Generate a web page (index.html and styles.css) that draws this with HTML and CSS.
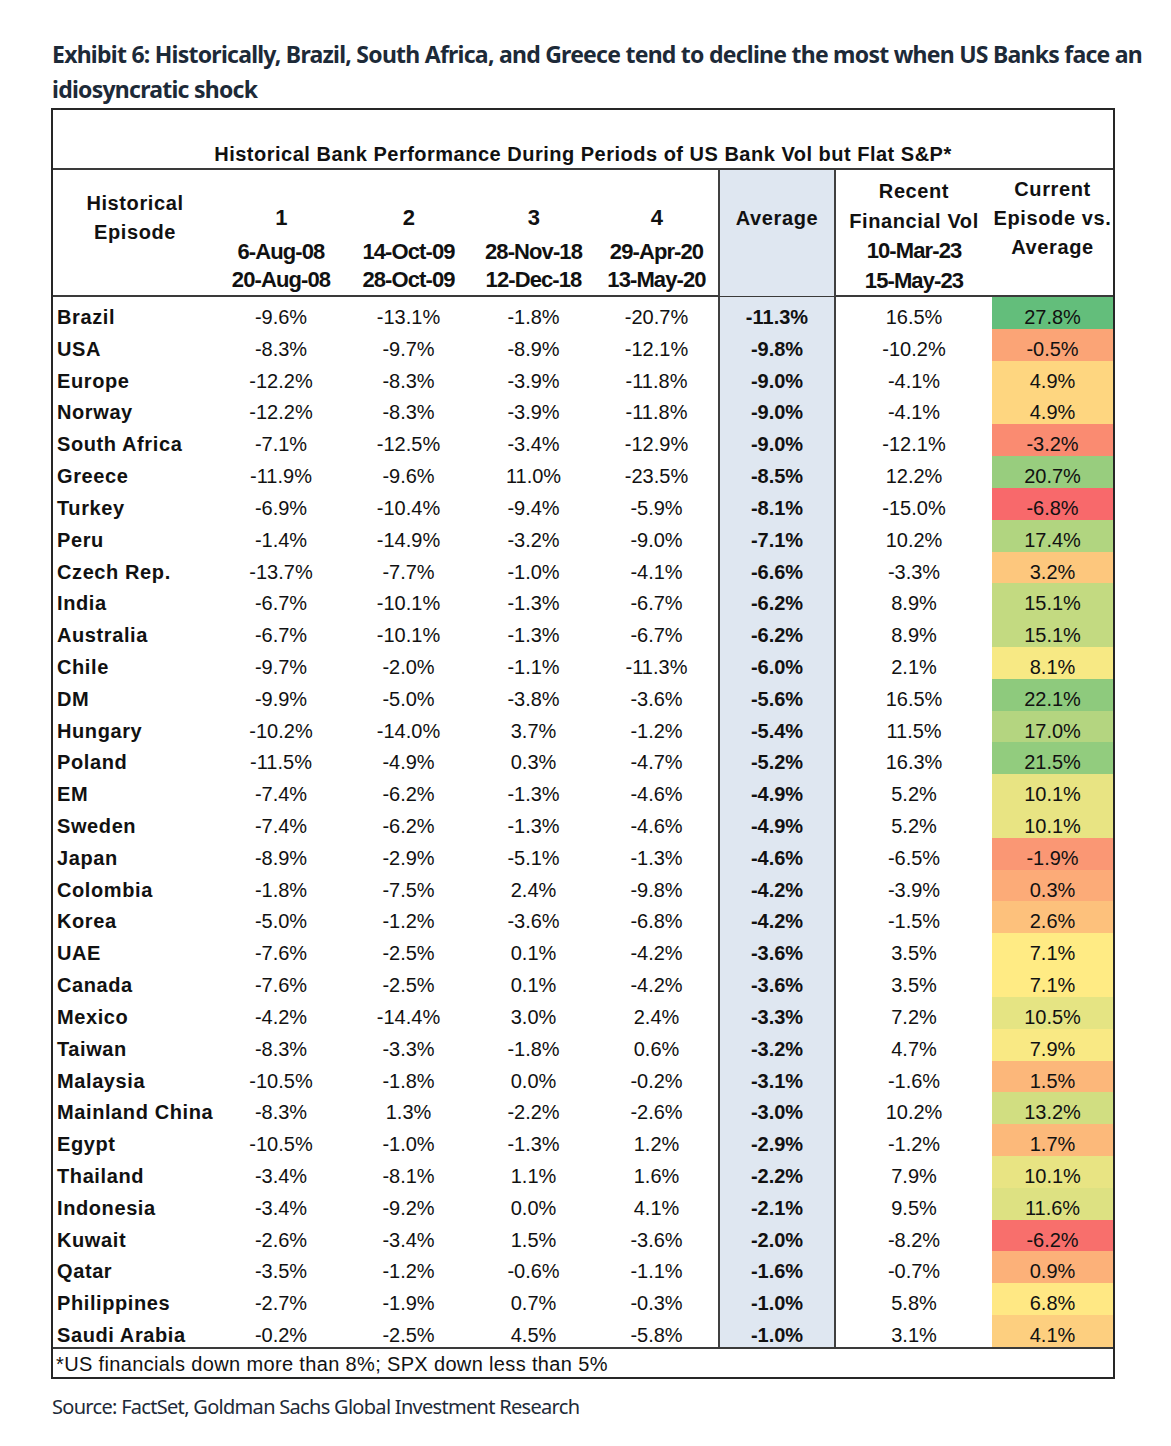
FILE: index.html
```html
<!DOCTYPE html>
<html>
<head>
<meta charset="utf-8">
<link rel="stylesheet" href="styles.css">
</head>
<body>
<div class="page">
  <h1 class="title">Exhibit 6: Historically, Brazil, South Africa, and Greece tend to decline the most when US Banks face an<br>idiosyncratic shock</h1>
  <div class="box">
    <div class="cap">Historical Bank Performance During Periods of US Bank Vol but Flat S&amp;P*</div>
    <div class="row head">
      <div class="h hname">Historical<br>Episode</div>
      <div class="h hep"><div class="num">1</div><div class="dt">6-Aug-08</div><div class="dt">20-Aug-08</div></div>
      <div class="h hep"><div class="num">2</div><div class="dt">14-Oct-09</div><div class="dt">28-Oct-09</div></div>
      <div class="h hep"><div class="num">3</div><div class="dt">28-Nov-18</div><div class="dt">12-Dec-18</div></div>
      <div class="h hep"><div class="num">4</div><div class="dt">29-Apr-20</div><div class="dt">13-May-20</div></div>
      <div class="h avg havg">Average</div>
      <div class="h hrec">Recent<br>Financial Vol<div class="dt">10-Mar-23</div><div class="dt">15-May-23</div></div>
      <div class="h hcur">Current<br>Episode vs.<br>Average</div>
    </div>
    <div class="row"><div class="c name">Brazil</div><div class="c">-9.6%</div><div class="c">-13.1%</div><div class="c">-1.8%</div><div class="c">-20.7%</div><div class="c avg">-11.3%</div><div class="c">16.5%</div><div class="c cur" style="background:rgb(99,190,123)">27.8%</div></div>
    <div class="row"><div class="c name">USA</div><div class="c">-8.3%</div><div class="c">-9.7%</div><div class="c">-8.9%</div><div class="c">-12.1%</div><div class="c avg">-9.8%</div><div class="c">-10.2%</div><div class="c cur" style="background:rgb(251,164,118)">-0.5%</div></div>
    <div class="row"><div class="c name">Europe</div><div class="c">-12.2%</div><div class="c">-8.3%</div><div class="c">-3.9%</div><div class="c">-11.8%</div><div class="c avg">-9.0%</div><div class="c">-4.1%</div><div class="c cur" style="background:rgb(254,214,128)">4.9%</div></div>
    <div class="row"><div class="c name">Norway</div><div class="c">-12.2%</div><div class="c">-8.3%</div><div class="c">-3.9%</div><div class="c">-11.8%</div><div class="c avg">-9.0%</div><div class="c">-4.1%</div><div class="c cur" style="background:rgb(254,214,128)">4.9%</div></div>
    <div class="row"><div class="c name">South Africa</div><div class="c">-7.1%</div><div class="c">-12.5%</div><div class="c">-3.4%</div><div class="c">-12.9%</div><div class="c avg">-9.0%</div><div class="c">-12.1%</div><div class="c cur" style="background:rgb(250,139,113)">-3.2%</div></div>
    <div class="row"><div class="c name">Greece</div><div class="c">-11.9%</div><div class="c">-9.6%</div><div class="c">11.0%</div><div class="c">-23.5%</div><div class="c avg">-8.5%</div><div class="c">12.2%</div><div class="c cur" style="background:rgb(152,205,126)">20.7%</div></div>
    <div class="row"><div class="c name">Turkey</div><div class="c">-6.9%</div><div class="c">-10.4%</div><div class="c">-9.4%</div><div class="c">-5.9%</div><div class="c avg">-8.1%</div><div class="c">-15.0%</div><div class="c cur" style="background:rgb(248,105,107)">-6.8%</div></div>
    <div class="row"><div class="c name">Peru</div><div class="c">-1.4%</div><div class="c">-14.9%</div><div class="c">-3.2%</div><div class="c">-9.0%</div><div class="c avg">-7.1%</div><div class="c">10.2%</div><div class="c cur" style="background:rgb(177,213,128)">17.4%</div></div>
    <div class="row"><div class="c name">Czech Rep.</div><div class="c">-13.7%</div><div class="c">-7.7%</div><div class="c">-1.0%</div><div class="c">-4.1%</div><div class="c avg">-6.6%</div><div class="c">-3.3%</div><div class="c cur" style="background:rgb(253,199,125)">3.2%</div></div>
    <div class="row"><div class="c name">India</div><div class="c">-6.7%</div><div class="c">-10.1%</div><div class="c">-1.3%</div><div class="c">-6.7%</div><div class="c avg">-6.2%</div><div class="c">8.9%</div><div class="c cur" style="background:rgb(195,218,129)">15.1%</div></div>
    <div class="row"><div class="c name">Australia</div><div class="c">-6.7%</div><div class="c">-10.1%</div><div class="c">-1.3%</div><div class="c">-6.7%</div><div class="c avg">-6.2%</div><div class="c">8.9%</div><div class="c cur" style="background:rgb(195,218,129)">15.1%</div></div>
    <div class="row"><div class="c name">Chile</div><div class="c">-9.7%</div><div class="c">-2.0%</div><div class="c">-1.1%</div><div class="c">-11.3%</div><div class="c avg">-6.0%</div><div class="c">2.1%</div><div class="c cur" style="background:rgb(247,233,132)">8.1%</div></div>
    <div class="row"><div class="c name">DM</div><div class="c">-9.9%</div><div class="c">-5.0%</div><div class="c">-3.8%</div><div class="c">-3.6%</div><div class="c avg">-5.6%</div><div class="c">16.5%</div><div class="c cur" style="background:rgb(142,202,125)">22.1%</div></div>
    <div class="row"><div class="c name">Hungary</div><div class="c">-10.2%</div><div class="c">-14.0%</div><div class="c">3.7%</div><div class="c">-1.2%</div><div class="c avg">-5.4%</div><div class="c">11.5%</div><div class="c cur" style="background:rgb(180,213,128)">17.0%</div></div>
    <div class="row"><div class="c name">Poland</div><div class="c">-11.5%</div><div class="c">-4.9%</div><div class="c">0.3%</div><div class="c">-4.7%</div><div class="c avg">-5.2%</div><div class="c">16.3%</div><div class="c cur" style="background:rgb(146,204,126)">21.5%</div></div>
    <div class="row"><div class="c name">EM</div><div class="c">-7.4%</div><div class="c">-6.2%</div><div class="c">-1.3%</div><div class="c">-4.6%</div><div class="c avg">-4.9%</div><div class="c">5.2%</div><div class="c cur" style="background:rgb(232,228,131)">10.1%</div></div>
    <div class="row"><div class="c name">Sweden</div><div class="c">-7.4%</div><div class="c">-6.2%</div><div class="c">-1.3%</div><div class="c">-4.6%</div><div class="c avg">-4.9%</div><div class="c">5.2%</div><div class="c cur" style="background:rgb(232,228,131)">10.1%</div></div>
    <div class="row"><div class="c name">Japan</div><div class="c">-8.9%</div><div class="c">-2.9%</div><div class="c">-5.1%</div><div class="c">-1.3%</div><div class="c avg">-4.6%</div><div class="c">-6.5%</div><div class="c cur" style="background:rgb(250,151,116)">-1.9%</div></div>
    <div class="row"><div class="c name">Colombia</div><div class="c">-1.8%</div><div class="c">-7.5%</div><div class="c">2.4%</div><div class="c">-9.8%</div><div class="c avg">-4.2%</div><div class="c">-3.9%</div><div class="c cur" style="background:rgb(252,171,120)">0.3%</div></div>
    <div class="row"><div class="c name">Korea</div><div class="c">-5.0%</div><div class="c">-1.2%</div><div class="c">-3.6%</div><div class="c">-6.8%</div><div class="c avg">-4.2%</div><div class="c">-1.5%</div><div class="c cur" style="background:rgb(253,193,124)">2.6%</div></div>
    <div class="row"><div class="c name">UAE</div><div class="c">-7.6%</div><div class="c">-2.5%</div><div class="c">0.1%</div><div class="c">-4.2%</div><div class="c avg">-3.6%</div><div class="c">3.5%</div><div class="c cur" style="background:rgb(255,235,132)">7.1%</div></div>
    <div class="row"><div class="c name">Canada</div><div class="c">-7.6%</div><div class="c">-2.5%</div><div class="c">0.1%</div><div class="c">-4.2%</div><div class="c avg">-3.6%</div><div class="c">3.5%</div><div class="c cur" style="background:rgb(255,235,132)">7.1%</div></div>
    <div class="row"><div class="c name">Mexico</div><div class="c">-4.2%</div><div class="c">-14.4%</div><div class="c">3.0%</div><div class="c">2.4%</div><div class="c avg">-3.3%</div><div class="c">7.2%</div><div class="c cur" style="background:rgb(229,228,131)">10.5%</div></div>
    <div class="row"><div class="c name">Taiwan</div><div class="c">-8.3%</div><div class="c">-3.3%</div><div class="c">-1.8%</div><div class="c">0.6%</div><div class="c avg">-3.2%</div><div class="c">4.7%</div><div class="c cur" style="background:rgb(249,233,132)">7.9%</div></div>
    <div class="row"><div class="c name">Malaysia</div><div class="c">-10.5%</div><div class="c">-1.8%</div><div class="c">0.0%</div><div class="c">-0.2%</div><div class="c avg">-3.1%</div><div class="c">-1.6%</div><div class="c cur" style="background:rgb(252,183,122)">1.5%</div></div>
    <div class="row"><div class="c name">Mainland China</div><div class="c">-8.3%</div><div class="c">1.3%</div><div class="c">-2.2%</div><div class="c">-2.6%</div><div class="c avg">-3.0%</div><div class="c">10.2%</div><div class="c cur" style="background:rgb(209,222,129)">13.2%</div></div>
    <div class="row"><div class="c name">Egypt</div><div class="c">-10.5%</div><div class="c">-1.0%</div><div class="c">-1.3%</div><div class="c">1.2%</div><div class="c avg">-2.9%</div><div class="c">-1.2%</div><div class="c cur" style="background:rgb(252,185,122)">1.7%</div></div>
    <div class="row"><div class="c name">Thailand</div><div class="c">-3.4%</div><div class="c">-8.1%</div><div class="c">1.1%</div><div class="c">1.6%</div><div class="c avg">-2.2%</div><div class="c">7.9%</div><div class="c cur" style="background:rgb(232,228,131)">10.1%</div></div>
    <div class="row"><div class="c name">Indonesia</div><div class="c">-3.4%</div><div class="c">-9.2%</div><div class="c">0.0%</div><div class="c">4.1%</div><div class="c avg">-2.1%</div><div class="c">9.5%</div><div class="c cur" style="background:rgb(221,225,130)">11.6%</div></div>
    <div class="row"><div class="c name">Kuwait</div><div class="c">-2.6%</div><div class="c">-3.4%</div><div class="c">1.5%</div><div class="c">-3.6%</div><div class="c avg">-2.0%</div><div class="c">-8.2%</div><div class="c cur" style="background:rgb(248,111,108)">-6.2%</div></div>
    <div class="row"><div class="c name">Qatar</div><div class="c">-3.5%</div><div class="c">-1.2%</div><div class="c">-0.6%</div><div class="c">-1.1%</div><div class="c avg">-1.6%</div><div class="c">-0.7%</div><div class="c cur" style="background:rgb(252,177,121)">0.9%</div></div>
    <div class="row"><div class="c name">Philippines</div><div class="c">-2.7%</div><div class="c">-1.9%</div><div class="c">0.7%</div><div class="c">-0.3%</div><div class="c avg">-1.0%</div><div class="c">5.8%</div><div class="c cur" style="background:rgb(255,232,132)">6.8%</div></div>
    <div class="row"><div class="c name">Saudi Arabia</div><div class="c">-0.2%</div><div class="c">-2.5%</div><div class="c">4.5%</div><div class="c">-5.8%</div><div class="c avg">-1.0%</div><div class="c">3.1%</div><div class="c cur" style="background:rgb(253,207,127)">4.1%</div></div>
    <div class="foot">*US financials down more than 8%; SPX down less than 5%</div>
  </div>
  <div class="source">Source: FactSet, Goldman Sachs Global Investment Research</div>
</div>
</body>
</html>
```
FILE: styles.css
```css
body {
  margin: 0;
  background: #ffffff;
  color: #000000;
  font-family: "Liberation Sans", Arial, sans-serif;
}
.page {
  padding: 37px 0 0 51px;
}
.title {
  margin: 0 0 0 1px;
  font-family: "Noto Sans", "Open Sans", sans-serif;
  font-weight: bold;
  font-size: 23px;
  letter-spacing: -0.75px;
  line-height: 35px;
  color: #1d2a38;
  white-space: nowrap;
}
.box {
  width: 1064px;
  box-sizing: border-box;
  border: 2px solid #262626;
  margin-top: 1px;
}
.cap {
  height: 60px;
  box-sizing: border-box;
  padding-top: 32px;
  border-bottom: 2px solid #3a3a3a;
  text-align: center;
  font-size: 20px;
  font-weight: bold;
  letter-spacing: 0.5px;
  line-height: 24px;
  color: #111;
}
.row {
  display: grid;
  grid-template-columns: 164px 128px 127px 123px 123px 118px 156px 121px;
  height: 31.818px;
}
.head {
  height: 127px;
  box-sizing: border-box;
  border-bottom: 2px solid #3a3a3a;
}
.h {
  text-align: center;
  font-size: 20px;
  font-weight: bold;
  letter-spacing: 0.6px;
  color: #111;
}
.hname {
  padding-top: 19px;
  line-height: 29px;
}
.hep {
  padding-top: 33px;
}
.num {
  font-size: 22px;
  letter-spacing: -0.9px;
  line-height: 30px;
  margin-bottom: 5px;
}
.dt {
  font-size: 22px;
  letter-spacing: -0.9px;
  line-height: 28px;
}
.hrec .dt {
  line-height: 30px;
}
.havg {
  padding-top: 33px;
  line-height: 30px;
}
.hrec {
  padding-top: 6px;
  line-height: 30px;
}
.hcur {
  padding-top: 5px;
  line-height: 29px;
}
.avg {
  background: #dfe7f1;
  border-left: 2px solid #404040;
  border-right: 2px solid #404040;
}
.c {
  text-align: center;
  font-size: 20px;
  line-height: 22px;
  padding-top: 9px;
  color: #111;
}
.c.avg {
  font-weight: bold;
}
.c.name {
  text-align: left;
  padding-left: 4px;
  font-weight: bold;
  letter-spacing: 0.6px;
}
.foot {
  border-top: 2px solid #3a3a3a;
  height: 28px;
  padding-left: 3px;
  font-size: 20px;
  letter-spacing: 0.35px;
  line-height: 30px;
  color: #111;
}
.source {
  margin-top: 14px;
  margin-left: 1px;
  font-family: "Noto Sans", "Open Sans", sans-serif;
  font-size: 20px;
  letter-spacing: -0.7px;
  line-height: 28px;
  color: #1d2a38;
}
```
